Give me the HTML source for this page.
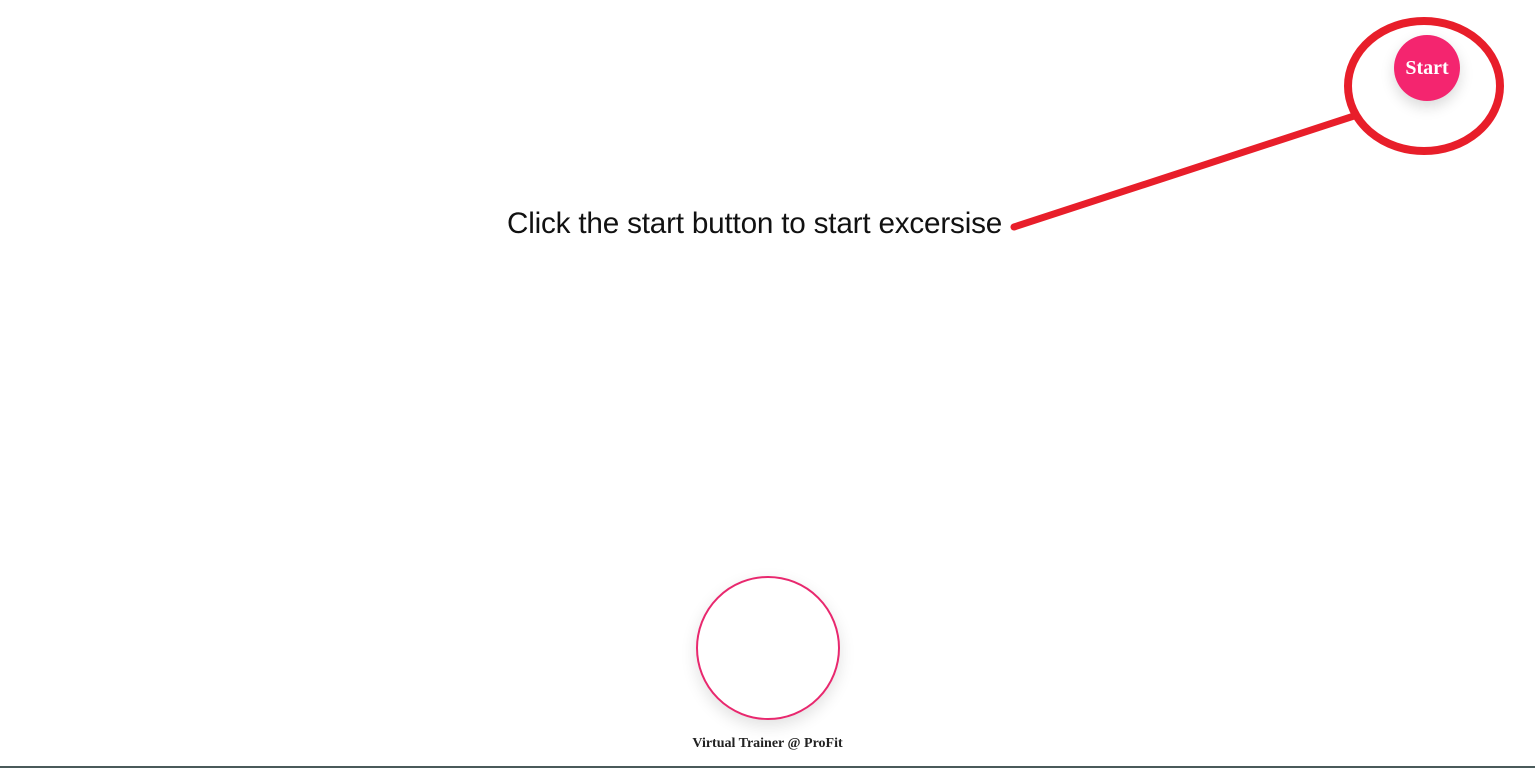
<!DOCTYPE html>
<html><head><style>
html,body{margin:0;padding:0;width:1535px;height:768px;overflow:hidden;background:#fff;position:relative}
.start{position:absolute;left:1394px;top:35px;width:66px;height:66px;border-radius:50%;background:#f4256f;color:#fff;font:bold 20px "Liberation Serif",serif;display:flex;align-items:center;justify-content:center;box-shadow:0 6px 14px rgba(0,0,0,0.15)}
.msg{position:absolute;left:507px;top:207px;font:29.7px "Liberation Sans",sans-serif;color:#111;white-space:nowrap;letter-spacing:-0.2px}
.ring{position:absolute;left:696px;top:576px;width:140px;height:140px;border:2px solid #e8286e;border-radius:50%;box-shadow:0 6px 16px rgba(0,0,0,0.12)}
.foot{position:absolute;left:0;width:1535px;top:736px;text-align:center;font:bold 14px "Liberation Serif",serif;color:#222}
.bar{position:absolute;left:0;top:766px;width:1535px;height:2px;background:#4a5a5a}
svg{position:absolute;left:0;top:0}
</style></head><body>
<div class="msg">Click the start button to start excersise</div>
<div class="start">Start</div>
<svg width="1535" height="768">
<ellipse cx="1424" cy="86" rx="76" ry="65" fill="none" stroke="#e81e2a" stroke-width="8"/>
<line x1="1014" y1="227" x2="1354" y2="116" stroke="#e81e2a" stroke-width="7" stroke-linecap="round"/>
</svg>
<div class="ring"></div>
<div class="foot">Virtual Trainer @ ProFit</div>
<div class="bar"></div>
</body></html>
